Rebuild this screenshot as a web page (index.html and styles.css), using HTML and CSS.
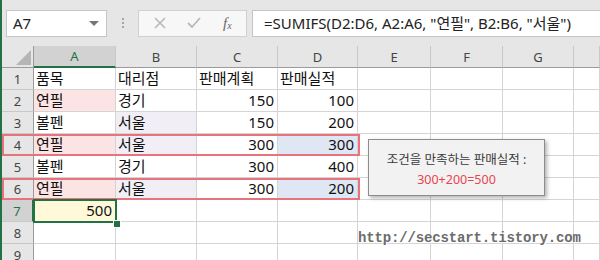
FILE: index.html
```html
<!DOCTYPE html>
<html lang="ko">
<head>
    <meta charset="UTF-8">
    <title>SUMIFS</title>
    <link rel="stylesheet" href="styles.css">
</head>
<body>
    <div class="app">
        <div class="formula-bar">
            <div class="name-box">
                <span>A7</span>
                <span class="caret"></span>
            </div>
            <div class="grip"><i></i><i></i><i></i></div>
            <div class="fx-buttons">
                <svg class="btn-icon" width="14" height="14" viewBox="0 0 14 14"><path d="M2 2 L12 12 M12 2 L2 12" stroke="#b9b9b9" stroke-width="1.6" fill="none"/></svg>
                <svg class="btn-icon" width="16" height="14" viewBox="0 0 16 14"><path d="M2 7 L6 11 L14 2" stroke="#b9b9b9" stroke-width="1.8" fill="none"/></svg>
                <span class="fx">f<sub>x</sub></span>
            </div>
            <div class="formula-input">=SUMIFS(D2:D6, A2:A6, "연필", B2:B6, "서울")</div>
        </div>

        <div class="sheet">
            <div class="grid">
                <div class="hdr corner"><span class="tri"></span></div>
                <div class="hdr col sel">A</div>
                <div class="hdr col">B</div>
                <div class="hdr col">C</div>
                <div class="hdr col">D</div>
                <div class="hdr col">E</div>
                <div class="hdr col">F</div>
                <div class="hdr col">G</div>
                <div class="hdr col"></div>

                <div class="hdr row">1</div>
                <div class="cell">품목</div>
                <div class="cell">대리점</div>
                <div class="cell">판매계획</div>
                <div class="cell">판매실적</div>
                <div class="cell"></div><div class="cell"></div><div class="cell"></div><div class="cell"></div>

                <div class="hdr row">2</div>
                <div class="cell pink">연필</div>
                <div class="cell">경기</div>
                <div class="cell num">150</div>
                <div class="cell num">100</div>
                <div class="cell"></div><div class="cell"></div><div class="cell"></div><div class="cell"></div>

                <div class="hdr row">3</div>
                <div class="cell">볼펜</div>
                <div class="cell lilac">서울</div>
                <div class="cell num">150</div>
                <div class="cell num">200</div>
                <div class="cell"></div><div class="cell"></div><div class="cell"></div><div class="cell"></div>

                <div class="hdr row">4</div>
                <div class="cell pink">연필</div>
                <div class="cell lilac">서울</div>
                <div class="cell num">300</div>
                <div class="cell num blue">300</div>
                <div class="cell"></div><div class="cell"></div><div class="cell"></div><div class="cell"></div>

                <div class="hdr row">5</div>
                <div class="cell">볼펜</div>
                <div class="cell">경기</div>
                <div class="cell num">300</div>
                <div class="cell num">400</div>
                <div class="cell"></div><div class="cell"></div><div class="cell"></div><div class="cell"></div>

                <div class="hdr row">6</div>
                <div class="cell pink">연필</div>
                <div class="cell lilac">서울</div>
                <div class="cell num">300</div>
                <div class="cell num blue">200</div>
                <div class="cell"></div><div class="cell"></div><div class="cell"></div><div class="cell"></div>

                <div class="hdr row sel">7</div>
                <div class="cell num yellow">500</div>
                <div class="cell"></div><div class="cell"></div><div class="cell"></div>
                <div class="cell"></div><div class="cell"></div><div class="cell"></div><div class="cell"></div>

                <div class="hdr row">8</div>
                <div class="cell"></div><div class="cell"></div><div class="cell"></div><div class="cell"></div>
                <div class="cell"></div><div class="cell"></div><div class="cell"></div><div class="cell"></div>

                <div class="hdr row">9</div>
                <div class="cell"></div><div class="cell"></div><div class="cell"></div><div class="cell"></div>
                <div class="cell"></div><div class="cell"></div><div class="cell"></div><div class="cell"></div>
            </div>

            <!-- overlays -->
            <div class="match-box row-4"></div>
            <div class="match-box row-6"></div>
            <div class="selection"></div>
            <div class="fill-handle"></div>

            <div class="note">
                <p>조건을 만족하는 판매실적 :</p>
                <p class="result">300+200=500</p>
            </div>

            <div class="watermark">http://secstart.tistory.com</div>
        </div>
    </div>
</body>
</html>
```

FILE: styles.css
```css
body {
    margin: 0;
    font-family: "Noto Sans", "Noto Sans CJK KR", sans-serif;
    background-color: #ffffff;
    overflow: hidden;
}

.app {
    border-left: 2px solid #217346;
    width: 598px;
    height: 260px;
    overflow: hidden;
}

/* formula bar */
.formula-bar {
    height: 46px;
    background-color: #e6e6e6;
    display: flex;
    align-items: center;
    padding-left: 4px;
    box-sizing: border-box;
}

.name-box {
    width: 101px;
    height: 27px;
    box-sizing: border-box;
    background-color: #fff;
    border: 1px solid #c6c6c6;
    display: flex;
    align-items: center;
    justify-content: space-between;
    padding: 0 6px 0 6px;
    font-size: 15px;
    color: #222;
}

.caret {
    width: 0;
    height: 0;
    border-left: 5px solid transparent;
    border-right: 5px solid transparent;
    border-top: 5px solid #777;
    margin-right: 1px;
}

.grip {
    width: 31px;
    display: flex;
    flex-direction: column;
    align-items: center;
    gap: 2px;
}

.grip i {
    width: 2px;
    height: 2px;
    background-color: #a6a6a6;
}

.fx-buttons {
    width: 109px;
    height: 27px;
    box-sizing: border-box;
    background-color: #f7f7f7;
    border: 1px solid #d0d0d0;
    display: flex;
    align-items: center;
    padding-left: 14px;
    gap: 19px;
}

.fx {
    font-family: "Liberation Serif", serif;
    font-style: italic;
    font-size: 15px;
    color: #666;
    margin-left: 2px;
}

.fx sub {
    font-size: 10px;
    vertical-align: -1px;
}

.formula-input {
    flex: 1;
    height: 27px;
    box-sizing: border-box;
    margin-left: 5px;
    background-color: #fff;
    border: 1px solid #c6c6c6;
    border-right: none;
    padding-left: 11px;
    font-size: 15px;
    line-height: 25px;
    color: #222;
    white-space: nowrap;
}

/* sheet */
.sheet {
    position: relative;
}

.grid {
    display: grid;
    grid-template-columns: 32px 82px 81px 81px 80px 73px 72px 71px 1fr;
    grid-auto-rows: 22px;
}

.hdr {
    background-color: #e6e6e6;
    color: #444;
    font-size: 13px;
    display: flex;
    align-items: center;
    justify-content: center;
    box-sizing: border-box;
}

.hdr.col {
    border-right: 1px solid #c8c8c8;
    border-bottom: 1px solid #9b9b9b;
}

.hdr.row {
    border-right: 1px solid #9b9b9b;
    border-bottom: 1px solid #c8c8c8;
}

.hdr.corner {
    border-right: 1px solid #9b9b9b;
    border-bottom: 1px solid #9b9b9b;
    position: relative;
}

.tri {
    position: absolute;
    right: 2px;
    bottom: 2px;
    width: 0;
    height: 0;
    border-left: 15px solid transparent;
    border-bottom: 15px solid #b5b5b5;
}

.hdr.col.sel {
    background-color: #d2d2d2;
    color: #217346;
    border-bottom: 2px solid #217346;
}

.hdr.row.sel {
    background-color: #d2d2d2;
    color: #217346;
    border-right: 2px solid #217346;
}

.cell {
    border-right: 1px solid #d4d4d4;
    border-bottom: 1px solid #d4d4d4;
    box-sizing: border-box;
    font-size: 15px;
    line-height: 21px;
    color: #111;
    padding: 0 3px 0 2px;
    white-space: nowrap;
    overflow: hidden;
}

.num {
    text-align: right;
}

.pink {
    background-color: #fce4e4;
}

.lilac {
    background-color: #f1eff5;
}

.blue {
    background-color: #dfe6f4;
}

.yellow {
    background-color: #fff9d9;
}

.match-box {
    position: absolute;
    left: 0;
    width: 358px;
    height: 22px;
    box-sizing: border-box;
    border: 2px solid #e7737c;
}

.row-4 {
    top: 88px;
}

.row-6 {
    top: 132px;
}

.selection {
    position: absolute;
    left: 31px;
    top: 153px;
    width: 84px;
    height: 24px;
    box-sizing: border-box;
    border: 2px solid #217346;
}

.fill-handle {
    position: absolute;
    left: 111px;
    top: 174px;
    width: 6px;
    height: 6px;
    background-color: #217346;
    border: 1px solid #fff;
}

.note {
    position: absolute;
    left: 366px;
    top: 93px;
    width: 177px;
    height: 57px;
    box-sizing: border-box;
    background-color: #f2f2f2;
    border: 1px solid #8c8c8c;
    box-shadow: 2px 2px 4px rgba(0, 0, 0, 0.3);
    text-align: center;
    padding-top: 10px;
}

.note p {
    margin: 0;
    font-size: 12.5px;
    line-height: 20px;
    color: #3a3a3a;
}

.note .result {
    color: #e8454e;
}

.watermark {
    position: absolute;
    left: 356px;
    top: 184px;
    font-family: "Liberation Mono", monospace;
    font-weight: bold;
    font-size: 14px;
    letter-spacing: -0.15px;
    color: #6c6c6c;
    text-shadow: 1px 1px 1px #fff;
}
```
